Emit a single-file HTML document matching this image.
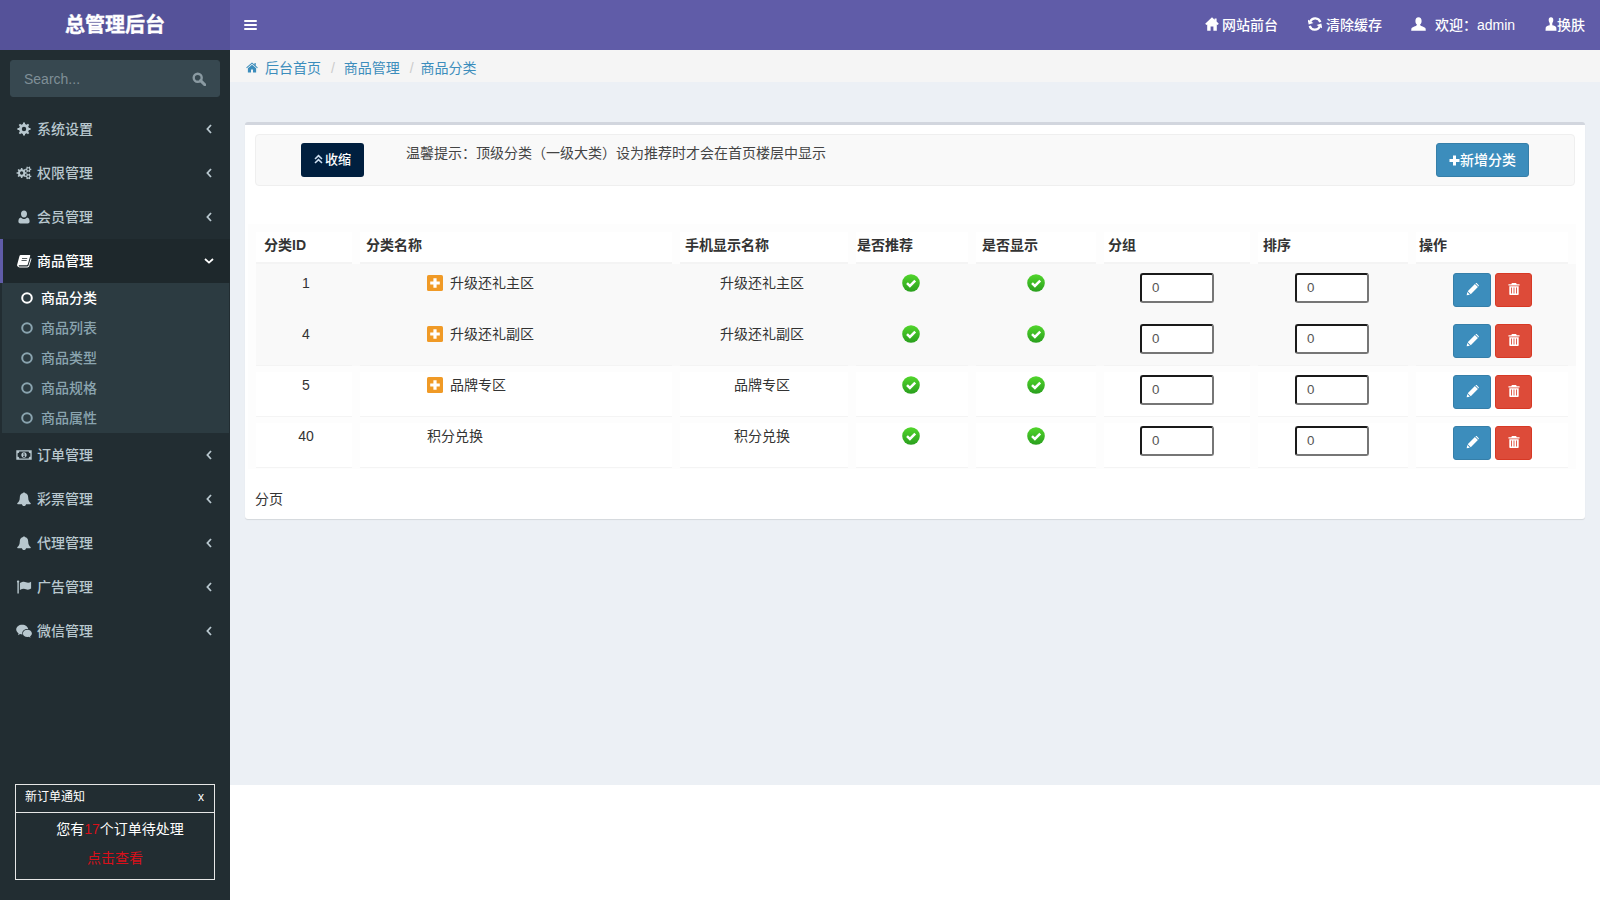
<!DOCTYPE html>
<html lang="zh-CN">
<head>
<meta charset="utf-8">
<title>总管理后台</title>
<style>
*{box-sizing:border-box}
html,body{margin:0;padding:0}
body{width:1600px;height:900px;overflow:hidden;background:#fff;font-family:"Liberation Sans","Noto Sans CJK SC",sans-serif;font-size:14px;line-height:20px;color:#333;position:relative}
a{text-decoration:none;color:inherit}
ul{list-style:none;margin:0;padding:0}
svg{display:block}
/* header */
.logo{position:absolute;left:0;top:0;width:230px;height:50px;background:#555299;color:#fff;font-size:20px;font-weight:bold;line-height:51px;text-align:center;-webkit-text-stroke:0.35px #fff}
.navbar{position:absolute;left:230px;top:0;width:1370px;height:50px;background:#605ca8;color:#fff}
.toggle{position:absolute;left:14px;top:20px;width:13px;height:12px}
.toggle i{display:block;height:2px;background:#fff;margin-bottom:2px;border-radius:1px}
.nav-r{position:absolute;top:0;height:50px;line-height:50px;color:#fff;font-size:14px;white-space:nowrap;font-weight:500}
.nav-r svg{position:absolute;top:17px}
/* sidebar */
.sidebar{position:absolute;left:0;top:50px;width:230px;height:850px;background:#222d32;color:#b8c7ce}
.sform{position:absolute;left:10px;top:10px;width:210px;height:37px;border:1px solid #374850;border-radius:3px;background:#374850}
.sform span{position:absolute;left:13px;top:8px;color:#7f8f97;font-size:14px;line-height:20px}
.sform svg{position:absolute;right:13px;top:11px}
.menu{position:absolute;left:0;top:57px;width:230px;font-weight:500}
.menu>li>a{display:block;height:44px;padding:12px 5px 12px 15px;position:relative;border-left:3px solid transparent;color:#b8c7ce;line-height:20px}
.menu>li>a .ic{position:absolute;left:13px;top:15px;width:16px;height:14px}
.menu>li>a .tx{position:absolute;left:34px;top:12px}
.menu>li>a .ar{position:absolute;right:18px;top:17px}
.menu>li.active>a{background:#1e282c;color:#fff;border-left-color:#605ca8}
.sub{background:#2c3b41;padding:0 0 0 5px;margin:0 1px 0 2px}
.sub li a{display:block;height:30px;padding:5px 5px 5px 15px;color:#8aa4af;position:relative;line-height:20px}
.sub li a .tx{position:absolute;left:34px;top:5px}
.sub li a svg{position:absolute;left:14px;top:9px}
.sub li.on a{color:#fff}
.notice{position:absolute;left:15px;top:734px;width:200px;height:96px;border:1px solid #e6e6e6;color:#fff}
.notice .hd{height:28px;border-bottom:1px solid #e6e6e6;font-size:12px;line-height:24px;padding-left:9px;position:relative}
.notice .hd b{position:absolute;right:10px;top:0;font-weight:normal}
.notice p{margin:0;text-align:center;font-size:14px}
.red{color:#d8101a}
/* content */
.content{position:absolute;left:230px;top:50px;width:1370px;height:735px;background:#ecf0f5}
.crumb{position:absolute;left:0;top:0;width:1370px;height:32px;background:#f5f5f5;color:#3c8dbc;line-height:20px;padding:8px 15px 0 15px;white-space:nowrap}
.crumb svg{position:absolute;left:16px;top:12px}
.crumb .sep{color:#ccc;padding:0 5px 0 10px}
.box{position:absolute;left:15px;top:72px;width:1340px;height:397px;background:#fff;border-top:3px solid #d2d6de;border-radius:3px;box-shadow:0 1px 1px rgba(0,0,0,.1)}
.tbar{position:absolute;left:10px;top:9px;width:1320px;height:52px;background:#f9f9f9;border:1px solid #efefef;border-radius:4px}
.btn{position:absolute;display:block;border-radius:3px;color:#fff;text-align:center;font-size:14px;border:1px solid transparent}
.tip{position:absolute;left:150px;top:8px;color:#444;white-space:nowrap}

.tbl{position:absolute;background:#fdfdfd}
.th{position:absolute;height:32px;background:#fff;border-bottom:2px solid #f4f4f4;font-weight:bold;color:#333;line-height:20px;padding-top:3px;white-space:nowrap}
.td{position:absolute;height:45px;background:#fff;border-bottom:1px solid #f4f4f4;color:#333}
.td.g{background:#f9f9f9}
.stripe{position:absolute;left:8px;width:1320px;background:#f9f9f9}
.c{text-align:center}
.inp{position:absolute;width:74px;height:30px;border:2px solid;border-color:#1a1a1a #767676 #767676 #1a1a1a;border-radius:3px;background:#fff;font-size:13.33px;line-height:26px;padding-left:10px;color:#555}
</style>
</head>
<body>
<svg width="0" height="0" style="position:absolute"><defs><linearGradient id="gk" x1="0" y1="0" x2="0" y2="1"><stop offset="0" stop-color="#52d62c"/><stop offset="1" stop-color="#2a9f1e"/></linearGradient></defs></svg>
<div class="logo">总管理后台</div>
<div class="navbar">
  <a class="toggle"><i></i><i></i><i></i></a>
  <a class="nav-r" style="left:975px"><svg width="14" height="14" viewBox="0 0 14 14" style=""><path fill="#fff" d="M7 0.2 L0.2 6.8 L1.4 8 L2.2 7.4 V13.8 H5.6 V9.6 H8.4 V13.8 H11.8 V7.4 L12.6 8 L13.8 6.8 L11.6 4.6 V1.4 H9.6 V2.7 Z"/></svg><span style="margin-left:17px">网站前台</span></a>
  <a class="nav-r" style="left:1078px"><svg width="14" height="14" viewBox="0 0 14 14" style=""><path fill="none" stroke="#fff" stroke-width="2.3" d="M12.3 5.2 A5.4 5.4 0 0 0 2.2 4.6"/><path fill="#fff" d="M0.2 2.2 L5.2 6.6 L0.2 7.2 Z" transform="rotate(-12 2 5)"/><path fill="none" stroke="#fff" stroke-width="2.3" d="M1.7 8.8 A5.4 5.4 0 0 0 11.8 9.4"/><path fill="#fff" d="M13.8 11.8 L8.8 7.4 L13.8 6.8 Z" transform="rotate(-12 12 9)"/></svg><span style="margin-left:18px">清除缓存</span></a>
  <a class="nav-r" style="left:1181px"><svg width="15" height="14" viewBox="0 0 15 14" style=""><path fill="#fff" d="M7.5 0.3 C9.6 0.3 10.6 1.9 10.6 3.9 C10.6 5.5 9.9 6.9 9.1 7.6 C9.1 8.3 9.3 8.6 10.2 9 C12.3 9.8 14.3 10.4 14.6 11.6 L14.8 13.7 H0.2 L0.4 11.6 C0.7 10.4 2.7 9.8 4.8 9 C5.7 8.6 5.9 8.3 5.9 7.6 C5.1 6.9 4.4 5.5 4.4 3.9 C4.4 1.9 5.4 0.3 7.5 0.3 Z"/></svg><span style="margin-left:24px">欢迎：admin</span></a>
  <a class="nav-r" style="left:1315px"><svg width="12" height="14" viewBox="0 0 12 14" style=""><path fill="#fff" d="M6 0.3 C7.6 0.3 8.3 1.4 8.3 3 C8.3 4.3 7.8 5.3 7.3 6 L7.3 8.2 C9 8.6 11 9.2 11.3 10.4 L11.5 13.7 H0.5 L0.7 10.4 C1 9.2 3 8.6 4.7 8.2 L4.7 6 C4.2 5.3 3.7 4.3 3.7 3 C3.7 1.4 4.4 0.3 6 0.3 Z"/></svg><span style="margin-left:12px">换肤</span></a>
</div>
<div class="sidebar">
  <div class="sform"><span>Search...</span><svg width="14" height="14" viewBox="0 0 14 14" style=""><circle cx="5.7" cy="5.7" r="4" fill="none" stroke="#8a9aa2" stroke-width="2.4"/><path d="M8.6 8.6 L12.8 12.8" stroke="#8a9aa2" stroke-width="3" stroke-linecap="round"/></svg></div>
  <ul class="menu">
  <li class=""><a><svg class="ic" width="14" height="14" viewBox="0 0 14 14" fill="#b8c7ce"><path fill-rule="evenodd" d="M11.88 5.91 L13.53 6.07 L13.53 7.93 L11.88 8.09 L11.22 9.68 L12.28 10.96 L10.96 12.28 L9.68 11.22 L8.09 11.88 L7.93 13.53 L6.07 13.53 L5.91 11.88 L4.32 11.22 L3.04 12.28 L1.72 10.96 L2.78 9.68 L2.12 8.09 L0.47 7.93 L0.47 6.07 L2.12 5.91 L2.78 4.32 L1.72 3.04 L3.04 1.72 L4.32 2.78 L5.91 2.12 L6.07 0.47 L7.93 0.47 L8.09 2.12 L9.68 2.78 L10.96 1.72 L12.28 3.04 L11.22 4.32 Z M9.20 7.00 A2.2 2.2 0 1 0 4.80 7.00 A2.2 2.2 0 1 0 9.20 7.00 Z"/></svg><span class="tx">系统设置</span><svg class="ar" width="6" height="10" viewBox="0 0 6 10"><path d="M5 1 L1.4 5 L5 9" fill="none" stroke="#b8c7ce" stroke-width="1.8"/></svg></a></li>
  <li class=""><a><svg class="ic" width="16" height="15" viewBox="0 0 16 15" fill="#b8c7ce"><path fill-rule="evenodd" d="M9.50 6.61 L10.95 6.73 L10.95 8.27 L9.50 8.39 L8.96 9.70 L9.90 10.80 L8.80 11.90 L7.70 10.96 L6.39 11.50 L6.27 12.95 L4.73 12.95 L4.61 11.50 L3.30 10.96 L2.20 11.90 L1.10 10.80 L2.04 9.70 L1.50 8.39 L0.05 8.27 L0.05 6.73 L1.50 6.61 L2.04 5.30 L1.10 4.20 L2.20 3.10 L3.30 4.04 L4.61 3.50 L4.73 2.05 L6.27 2.05 L6.39 3.50 L7.70 4.04 L8.80 3.10 L9.90 4.20 L8.96 5.30 Z M7.30 7.50 A1.8 1.8 0 1 0 3.70 7.50 A1.8 1.8 0 1 0 7.30 7.50 Z"/><path fill-rule="evenodd" d="M14.90 2.91 L15.84 2.98 L15.84 4.22 L14.90 4.29 L14.35 5.24 L14.76 6.10 L13.69 6.72 L13.15 5.94 L12.05 5.94 L11.51 6.72 L10.44 6.10 L10.85 5.24 L10.30 4.29 L9.36 4.22 L9.36 2.98 L10.30 2.91 L10.85 1.96 L10.44 1.10 L11.51 0.48 L12.05 1.26 L13.15 1.26 L13.69 0.48 L14.76 1.10 L14.35 1.96 Z M13.70 3.60 A1.1 1.1 0 1 0 11.50 3.60 A1.1 1.1 0 1 0 13.70 3.60 Z"/><path fill-rule="evenodd" d="M14.90 10.51 L15.84 10.58 L15.84 11.82 L14.90 11.89 L14.35 12.84 L14.76 13.70 L13.69 14.32 L13.15 13.54 L12.05 13.54 L11.51 14.32 L10.44 13.70 L10.85 12.84 L10.30 11.89 L9.36 11.82 L9.36 10.58 L10.30 10.51 L10.85 9.56 L10.44 8.70 L11.51 8.08 L12.05 8.86 L13.15 8.86 L13.69 8.08 L14.76 8.70 L14.35 9.56 Z M13.70 11.20 A1.1 1.1 0 1 0 11.50 11.20 A1.1 1.1 0 1 0 13.70 11.20 Z"/></svg><span class="tx">权限管理</span><svg class="ar" width="6" height="10" viewBox="0 0 6 10"><path d="M5 1 L1.4 5 L5 9" fill="none" stroke="#b8c7ce" stroke-width="1.8"/></svg></a></li>
  <li class=""><a><svg class="ic" width="12" height="14" viewBox="0 0 12 14" fill="#b8c7ce"><path d="M6 0.6 C7.9 0.6 9 2.1 9 4 C9 5.9 7.9 7.6 6 7.6 C4.1 7.6 3 5.9 3 4 C3 2.1 4.1 0.6 6 0.6 Z M2.9 7.4 C3.6 8.3 4.7 8.9 6 8.9 C7.3 8.9 8.4 8.3 9.1 7.4 C10.9 7.6 11.6 9.3 11.6 11.5 C11.6 12.7 10.8 13.4 9.7 13.4 H2.3 C1.2 13.4 0.4 12.7 0.4 11.5 C0.4 9.3 1.1 7.6 2.9 7.4 Z"/></svg><span class="tx">会员管理</span><svg class="ar" width="6" height="10" viewBox="0 0 6 10"><path d="M5 1 L1.4 5 L5 9" fill="none" stroke="#b8c7ce" stroke-width="1.8"/></svg></a></li>
  <li class="active"><a><svg class="ic" width="15" height="14" viewBox="0 0 15 14" fill="#fff"><path d="M4.2 1 H13 C13.6 1 13.9 1.5 13.7 2.1 L11.3 10.3 C11.1 10.9 10.5 11.3 9.9 11.3 H2.6 C2.2 11.3 2 11.6 2.2 11.9 C2.4 12.3 2.8 12.4 3.2 12.4 H10.9 C11.4 12.4 11.8 12.1 12 11.6 L14.3 3.9 C14.9 4.3 15 4.9 14.8 5.5 L12.7 12.3 C12.5 13 11.8 13.5 11 13.5 H3.2 C2 13.5 0.9 12.7 0.6 11.6 C0.5 11.2 0.6 10.9 0.7 10.6 L3 2.1 C3.2 1.4 3.6 1 4.2 1 Z M5.6 4.2 L5.4 5 H10.6 L10.8 4.2 Z M5.1 6.2 L4.9 7 H10.1 L10.3 6.2 Z" fill-rule="evenodd"/></svg><span class="tx">商品管理</span><svg class="ar" width="10" height="6" viewBox="0 0 10 6" style="top:19px;right:16px"><path d="M1 1 L5 4.6 L9 1" fill="none" stroke="#fff" stroke-width="1.8"/></svg></a><ul class="sub"><li class="on"><a><svg width="12" height="12" viewBox="0 0 12 12"><circle cx="6" cy="6" r="4.8" fill="none" stroke="#fff" stroke-width="2"/></svg><span class="tx">商品分类</span></a></li><li class=""><a><svg width="12" height="12" viewBox="0 0 12 12"><circle cx="6" cy="6" r="4.8" fill="none" stroke="#8aa4af" stroke-width="2"/></svg><span class="tx">商品列表</span></a></li><li class=""><a><svg width="12" height="12" viewBox="0 0 12 12"><circle cx="6" cy="6" r="4.8" fill="none" stroke="#8aa4af" stroke-width="2"/></svg><span class="tx">商品类型</span></a></li><li class=""><a><svg width="12" height="12" viewBox="0 0 12 12"><circle cx="6" cy="6" r="4.8" fill="none" stroke="#8aa4af" stroke-width="2"/></svg><span class="tx">商品规格</span></a></li><li class=""><a><svg width="12" height="12" viewBox="0 0 12 12"><circle cx="6" cy="6" r="4.8" fill="none" stroke="#8aa4af" stroke-width="2"/></svg><span class="tx">商品属性</span></a></li></ul></li>
  <li class=""><a><svg class="ic" width="16" height="14" viewBox="0 0 16 14" fill="#b8c7ce"><path fill-rule="evenodd" d="M0.3 2.3 H15.7 V11.7 H0.3 Z M1.6 5.2 V8.8 C2.8 8.8 3.3 9.4 3.3 10.5 H12.7 C12.7 9.4 13.2 8.8 14.4 8.8 V5.2 C13.2 5.2 12.7 4.6 12.7 3.5 H3.3 C3.3 4.6 2.8 5.2 1.6 5.2 Z M8 4.2 C9.6 4.2 10.7 5.4 10.7 7 C10.7 8.6 9.6 9.8 8 9.8 C6.4 9.8 5.3 8.6 5.3 7 C5.3 5.4 6.4 4.2 8 4.2 Z M7.2 5.6 V6.2 H7.7 V8.3 H7 V8.9 H9.1 V8.3 H8.5 V5.3 H7.9 Z"/></svg><span class="tx">订单管理</span><svg class="ar" width="6" height="10" viewBox="0 0 6 10"><path d="M5 1 L1.4 5 L5 9" fill="none" stroke="#b8c7ce" stroke-width="1.8"/></svg></a></li>
  <li class=""><a><svg class="ic" width="14" height="14" viewBox="0 0 14 14" fill="#b8c7ce"><path d="M7 0.2 C7.5 0.2 7.8 0.5 7.8 1 C10 1.4 11.2 3.2 11.2 5.4 C11.2 8.2 12.2 9.9 13.8 11.2 C13.8 11.8 13.4 12.2 12.8 12.2 H9 C9 13.3 8.1 14 7 14 C5.9 14 5 13.3 5 12.2 H1.2 C0.6 12.2 0.2 11.8 0.2 11.2 C1.8 9.9 2.8 8.2 2.8 5.4 C2.8 3.2 4 1.4 6.2 1 C6.2 0.5 6.5 0.2 7 0.2 Z"/></svg><span class="tx">彩票管理</span><svg class="ar" width="6" height="10" viewBox="0 0 6 10"><path d="M5 1 L1.4 5 L5 9" fill="none" stroke="#b8c7ce" stroke-width="1.8"/></svg></a></li>
  <li class=""><a><svg class="ic" width="14" height="14" viewBox="0 0 14 14" fill="#b8c7ce"><path d="M7 0.2 C7.5 0.2 7.8 0.5 7.8 1 C10 1.4 11.2 3.2 11.2 5.4 C11.2 8.2 12.2 9.9 13.8 11.2 C13.8 11.8 13.4 12.2 12.8 12.2 H9 C9 13.3 8.1 14 7 14 C5.9 14 5 13.3 5 12.2 H1.2 C0.6 12.2 0.2 11.8 0.2 11.2 C1.8 9.9 2.8 8.2 2.8 5.4 C2.8 3.2 4 1.4 6.2 1 C6.2 0.5 6.5 0.2 7 0.2 Z"/></svg><span class="tx">代理管理</span><svg class="ar" width="6" height="10" viewBox="0 0 6 10"><path d="M5 1 L1.4 5 L5 9" fill="none" stroke="#b8c7ce" stroke-width="1.8"/></svg></a></li>
  <li class=""><a><svg class="ic" width="15" height="14" viewBox="0 0 15 14" fill="#b8c7ce"><path d="M1.6 0.6 C2.3 0.6 2.8 1.1 2.8 1.7 C2.8 2.1 2.6 2.4 2.3 2.6 V13.6 H0.9 V2.6 C0.6 2.4 0.4 2.1 0.4 1.7 C0.4 1.1 0.9 0.6 1.6 0.6 Z M3.4 3 C5 2.1 6.2 1.7 7.4 1.7 C9 1.7 10 2.7 11.6 2.7 C12.6 2.7 13.6 2.3 14.6 1.8 V8.6 C13.6 9.2 12.6 9.7 11.4 9.7 C9.8 9.7 9 8.8 7.4 8.8 C6 8.8 4.8 9.3 3.4 10 Z"/></svg><span class="tx">广告管理</span><svg class="ar" width="6" height="10" viewBox="0 0 6 10"><path d="M5 1 L1.4 5 L5 9" fill="none" stroke="#b8c7ce" stroke-width="1.8"/></svg></a></li>
  <li class=""><a><svg class="ic" width="16" height="14" viewBox="0 0 16 14" fill="#b8c7ce"><path d="M6.2 0.8 C9.4 0.8 11.9 2.7 12.2 5.2 C11.9 5.15 11.6 5.1 11.3 5.1 C8.5 5.1 6.3 7 6.3 9.3 C6.3 9.7 6.35 10.1 6.5 10.4 C6.4 10.4 6.3 10.4 6.2 10.4 C5.4 10.4 4.8 10.3 4.1 10.1 L2 11.2 L2.6 9.4 C1.1 8.4 0.2 7.1 0.2 5.6 C0.2 2.9 2.9 0.8 6.2 0.8 Z"/><path d="M11.4 5.8 C13.9 5.8 15.9 7.4 15.9 9.4 C15.9 10.5 15.2 11.5 14.1 12.3 L14.5 13.7 L12.9 12.8 C12.4 12.9 11.9 13 11.4 13 C8.9 13 6.9 11.4 6.9 9.4 C6.9 7.4 8.9 5.8 11.4 5.8 Z"/></svg><span class="tx">微信管理</span><svg class="ar" width="6" height="10" viewBox="0 0 6 10"><path d="M5 1 L1.4 5 L5 9" fill="none" stroke="#b8c7ce" stroke-width="1.8"/></svg></a></li>
  </ul>
  <div class="notice">
    <div class="hd">新订单通知<b>x</b></div>
    <p style="margin-top:6px;padding-left:10px">您有<span class="red">17</span>个订单待处理</p>
    <p style="margin-top:9px"><a class="red">点击查看</a></p>
  </div>
</div>
<div class="content">
  <div class="crumb"><svg width="12" height="11" viewBox="0 0 13 12"><path fill="#3c8dbc" d="M6.5 0.6 L0.2 5.9 L0.9 6.7 L6.5 2 L12.1 6.7 L12.8 5.9 L10.6 4 V1.2 H9.2 V2.8 Z"/><path fill="#3c8dbc" d="M6.5 2.9 L2 6.7 V11.4 H5.4 V8.2 H7.6 V11.4 H11 V6.7 Z"/></svg><span style="margin-left:20px">后台首页</span><span class="sep">/&nbsp;</span><span>商品管理</span><span class="sep" style="padding-right:3px">/&nbsp;</span><span>商品分类</span></div>
  <div class="box">
    <div class="tbar"><a class="btn" style="left:45px;top:8px;width:63px;height:34px;line-height:32px;background:#001f3f;padding-right:0;font-size:13px;font-weight:500"><svg width="9" height="10" viewBox="0 0 9 10" style="display:inline-block;vertical-align:0px;margin-right:2px"><path d="M1 5 L4.5 1.6 L8 5 M1 9 L4.5 5.6 L8 9" fill="none" stroke="#cfe0f2" stroke-width="1.5"/></svg>收缩</a><span class="tip">温馨提示：顶级分类（一级大类）设为推荐时才会在首页楼层中显示</span><a class="btn" style="left:1180px;top:8px;width:93px;height:34px;line-height:32px;background:#3c8dbc;border-color:#367fa9;font-weight:500"><svg width="11" height="11" viewBox="0 0 11 11" style="display:inline-block;vertical-align:-1px"><path d="M4 0.5 H7 V4 H10.5 V7 H7 V10.5 H4 V7 H0.5 V4 H4 Z" fill="#fff"/></svg>新增分类</a></div>
    <div class="tbl" style="left:3px;top:99px;width:1328px;height:245px">
<div class="th" style="left:8px;top:8px;width:96px;padding-left:8px">分类ID</div>
<div class="th" style="left:112px;top:8px;width:312px;padding-left:6px">分类名称</div>
<div class="th" style="left:432px;top:8px;width:168px;padding-left:5px">手机显示名称</div>
<div class="th" style="left:608px;top:8px;width:112px;padding-left:1px">是否推荐</div>
<div class="th" style="left:728px;top:8px;width:120px;padding-left:6px">是否显示</div>
<div class="th" style="left:856px;top:8px;width:146px;padding-left:4px">分组</div>
<div class="th" style="left:1010px;top:8px;width:150px;padding-left:5px">排序</div>
<div class="th" style="left:1168px;top:8px;width:152px;padding-left:3px">操作</div>
<div class="stripe" style="top:40px;height:49px"></div>
<div class="td g" style="left:8px;top:46px;width:96px"><div class="c" style="padding-top:3px;padding-left:4px">1</div></div>
<div class="td g" style="left:112px;top:46px;width:312px"><div style="position:absolute;left:67px;top:3px;white-space:nowrap"><svg width="16" height="16" viewBox="0 0 15 15" style="display:inline-block;vertical-align:-3px;margin-right:7px"><rect width="15" height="15" rx="1.5" fill="#f09a26"/><path d="M6 3 H9 V6 H12 V9 H9 V12 H6 V9 H3 V6 H6 Z" fill="#fff"/></svg>升级还礼主区</div></div>
<div class="td g" style="left:432px;top:46px;width:168px"><div class="c" style="padding-top:3px;padding-right:4px">升级还礼主区</div></div>
<div class="td g" style="left:608px;top:46px;width:112px"><div style="padding-top:4px;padding-right:2px"><svg width="18" height="18" viewBox="0 0 18 18" style="margin:0 auto"><circle cx="9" cy="9" r="8.8" fill="url(#gk)"/><path d="M5 9.2 L7.9 12 L13.2 6.6" fill="none" stroke="#fff" stroke-width="2.5"/></svg></div></div>
<div class="td g" style="left:728px;top:46px;width:120px"><div style="padding-top:4px;padding-right:0px"><svg width="18" height="18" viewBox="0 0 18 18" style="margin:0 auto"><circle cx="9" cy="9" r="8.8" fill="url(#gk)"/><path d="M5 9.2 L7.9 12 L13.2 6.6" fill="none" stroke="#fff" stroke-width="2.5"/></svg></div></div>
<div class="td g" style="left:856px;top:46px;width:146px"><div class="inp" style="left:36px;top:3px">0</div></div>
<div class="td g" style="left:1010px;top:46px;width:150px"><div class="inp" style="left:37px;top:3px">0</div></div>
<div class="td g" style="left:1168px;top:46px;width:152px"><a class="btn" style="left:37px;top:3px;width:38px;height:34px;background:#3c8dbc;border-color:#367fa9"><svg width="13" height="13" viewBox="0 0 12 12" style="margin:9px auto 0"><path d="M8.2 1 L11 3.8 L4.4 10.4 L1.6 7.6 Z M1.2 8.4 L3.6 10.8 L0.6 11.4 Z M8.8 0.4 C9.2 0 9.8 0 10.2 0.4 L11.6 1.8 C12 2.2 12 2.8 11.6 3.2 Z" fill="#fff"/></svg></a><a class="btn" style="left:79px;top:3px;width:37px;height:34px;background:#dd4b39;border-color:#d73925"><svg width="12" height="14" viewBox="0 0 11 12" style="margin:8px auto 0"><path fill-rule="evenodd" d="M3.6 0.4 H7.4 L8 1.6 H10.6 V2.8 H0.4 V1.6 H3 Z M1.2 3.4 H9.8 V10.6 C9.8 11.2 9.4 11.6 8.8 11.6 H2.2 C1.6 11.6 1.2 11.2 1.2 10.6 Z M2.8 4.6 V10.2 H3.6 V4.6 Z M5.1 4.6 V10.2 H5.9 V4.6 Z M7.4 4.6 V10.2 H8.2 V4.6 Z" fill="#fff"/></svg></a></div>
<div class="stripe" style="top:89px;height:53px"></div>
<div class="td g" style="left:8px;top:97px;width:96px"><div class="c" style="padding-top:3px;padding-left:4px">4</div></div>
<div class="td g" style="left:112px;top:97px;width:312px"><div style="position:absolute;left:67px;top:3px;white-space:nowrap"><svg width="16" height="16" viewBox="0 0 15 15" style="display:inline-block;vertical-align:-3px;margin-right:7px"><rect width="15" height="15" rx="1.5" fill="#f09a26"/><path d="M6 3 H9 V6 H12 V9 H9 V12 H6 V9 H3 V6 H6 Z" fill="#fff"/></svg>升级还礼副区</div></div>
<div class="td g" style="left:432px;top:97px;width:168px"><div class="c" style="padding-top:3px;padding-right:4px">升级还礼副区</div></div>
<div class="td g" style="left:608px;top:97px;width:112px"><div style="padding-top:4px;padding-right:2px"><svg width="18" height="18" viewBox="0 0 18 18" style="margin:0 auto"><circle cx="9" cy="9" r="8.8" fill="url(#gk)"/><path d="M5 9.2 L7.9 12 L13.2 6.6" fill="none" stroke="#fff" stroke-width="2.5"/></svg></div></div>
<div class="td g" style="left:728px;top:97px;width:120px"><div style="padding-top:4px;padding-right:0px"><svg width="18" height="18" viewBox="0 0 18 18" style="margin:0 auto"><circle cx="9" cy="9" r="8.8" fill="url(#gk)"/><path d="M5 9.2 L7.9 12 L13.2 6.6" fill="none" stroke="#fff" stroke-width="2.5"/></svg></div></div>
<div class="td g" style="left:856px;top:97px;width:146px"><div class="inp" style="left:36px;top:3px">0</div></div>
<div class="td g" style="left:1010px;top:97px;width:150px"><div class="inp" style="left:37px;top:3px">0</div></div>
<div class="td g" style="left:1168px;top:97px;width:152px"><a class="btn" style="left:37px;top:3px;width:38px;height:34px;background:#3c8dbc;border-color:#367fa9"><svg width="13" height="13" viewBox="0 0 12 12" style="margin:9px auto 0"><path d="M8.2 1 L11 3.8 L4.4 10.4 L1.6 7.6 Z M1.2 8.4 L3.6 10.8 L0.6 11.4 Z M8.8 0.4 C9.2 0 9.8 0 10.2 0.4 L11.6 1.8 C12 2.2 12 2.8 11.6 3.2 Z" fill="#fff"/></svg></a><a class="btn" style="left:79px;top:3px;width:37px;height:34px;background:#dd4b39;border-color:#d73925"><svg width="12" height="14" viewBox="0 0 11 12" style="margin:8px auto 0"><path fill-rule="evenodd" d="M3.6 0.4 H7.4 L8 1.6 H10.6 V2.8 H0.4 V1.6 H3 Z M1.2 3.4 H9.8 V10.6 C9.8 11.2 9.4 11.6 8.8 11.6 H2.2 C1.6 11.6 1.2 11.2 1.2 10.6 Z M2.8 4.6 V10.2 H3.6 V4.6 Z M5.1 4.6 V10.2 H5.9 V4.6 Z M7.4 4.6 V10.2 H8.2 V4.6 Z" fill="#fff"/></svg></a></div>
<div class="td" style="left:8px;top:148px;width:96px"><div class="c" style="padding-top:3px;padding-left:4px">5</div></div>
<div class="td" style="left:112px;top:148px;width:312px"><div style="position:absolute;left:67px;top:3px;white-space:nowrap"><svg width="16" height="16" viewBox="0 0 15 15" style="display:inline-block;vertical-align:-3px;margin-right:7px"><rect width="15" height="15" rx="1.5" fill="#f09a26"/><path d="M6 3 H9 V6 H12 V9 H9 V12 H6 V9 H3 V6 H6 Z" fill="#fff"/></svg>品牌专区</div></div>
<div class="td" style="left:432px;top:148px;width:168px"><div class="c" style="padding-top:3px;padding-right:4px">品牌专区</div></div>
<div class="td" style="left:608px;top:148px;width:112px"><div style="padding-top:4px;padding-right:2px"><svg width="18" height="18" viewBox="0 0 18 18" style="margin:0 auto"><circle cx="9" cy="9" r="8.8" fill="url(#gk)"/><path d="M5 9.2 L7.9 12 L13.2 6.6" fill="none" stroke="#fff" stroke-width="2.5"/></svg></div></div>
<div class="td" style="left:728px;top:148px;width:120px"><div style="padding-top:4px;padding-right:0px"><svg width="18" height="18" viewBox="0 0 18 18" style="margin:0 auto"><circle cx="9" cy="9" r="8.8" fill="url(#gk)"/><path d="M5 9.2 L7.9 12 L13.2 6.6" fill="none" stroke="#fff" stroke-width="2.5"/></svg></div></div>
<div class="td" style="left:856px;top:148px;width:146px"><div class="inp" style="left:36px;top:3px">0</div></div>
<div class="td" style="left:1010px;top:148px;width:150px"><div class="inp" style="left:37px;top:3px">0</div></div>
<div class="td" style="left:1168px;top:148px;width:152px"><a class="btn" style="left:37px;top:3px;width:38px;height:34px;background:#3c8dbc;border-color:#367fa9"><svg width="13" height="13" viewBox="0 0 12 12" style="margin:9px auto 0"><path d="M8.2 1 L11 3.8 L4.4 10.4 L1.6 7.6 Z M1.2 8.4 L3.6 10.8 L0.6 11.4 Z M8.8 0.4 C9.2 0 9.8 0 10.2 0.4 L11.6 1.8 C12 2.2 12 2.8 11.6 3.2 Z" fill="#fff"/></svg></a><a class="btn" style="left:79px;top:3px;width:37px;height:34px;background:#dd4b39;border-color:#d73925"><svg width="12" height="14" viewBox="0 0 11 12" style="margin:8px auto 0"><path fill-rule="evenodd" d="M3.6 0.4 H7.4 L8 1.6 H10.6 V2.8 H0.4 V1.6 H3 Z M1.2 3.4 H9.8 V10.6 C9.8 11.2 9.4 11.6 8.8 11.6 H2.2 C1.6 11.6 1.2 11.2 1.2 10.6 Z M2.8 4.6 V10.2 H3.6 V4.6 Z M5.1 4.6 V10.2 H5.9 V4.6 Z M7.4 4.6 V10.2 H8.2 V4.6 Z" fill="#fff"/></svg></a></div>
<div class="td" style="left:8px;top:199px;width:96px"><div class="c" style="padding-top:3px;padding-left:4px">40</div></div>
<div class="td" style="left:112px;top:199px;width:312px"><div style="position:absolute;left:67px;top:3px;white-space:nowrap">积分兑换</div></div>
<div class="td" style="left:432px;top:199px;width:168px"><div class="c" style="padding-top:3px;padding-right:4px">积分兑换</div></div>
<div class="td" style="left:608px;top:199px;width:112px"><div style="padding-top:4px;padding-right:2px"><svg width="18" height="18" viewBox="0 0 18 18" style="margin:0 auto"><circle cx="9" cy="9" r="8.8" fill="url(#gk)"/><path d="M5 9.2 L7.9 12 L13.2 6.6" fill="none" stroke="#fff" stroke-width="2.5"/></svg></div></div>
<div class="td" style="left:728px;top:199px;width:120px"><div style="padding-top:4px;padding-right:0px"><svg width="18" height="18" viewBox="0 0 18 18" style="margin:0 auto"><circle cx="9" cy="9" r="8.8" fill="url(#gk)"/><path d="M5 9.2 L7.9 12 L13.2 6.6" fill="none" stroke="#fff" stroke-width="2.5"/></svg></div></div>
<div class="td" style="left:856px;top:199px;width:146px"><div class="inp" style="left:36px;top:3px">0</div></div>
<div class="td" style="left:1010px;top:199px;width:150px"><div class="inp" style="left:37px;top:3px">0</div></div>
<div class="td" style="left:1168px;top:199px;width:152px"><a class="btn" style="left:37px;top:3px;width:38px;height:34px;background:#3c8dbc;border-color:#367fa9"><svg width="13" height="13" viewBox="0 0 12 12" style="margin:9px auto 0"><path d="M8.2 1 L11 3.8 L4.4 10.4 L1.6 7.6 Z M1.2 8.4 L3.6 10.8 L0.6 11.4 Z M8.8 0.4 C9.2 0 9.8 0 10.2 0.4 L11.6 1.8 C12 2.2 12 2.8 11.6 3.2 Z" fill="#fff"/></svg></a><a class="btn" style="left:79px;top:3px;width:37px;height:34px;background:#dd4b39;border-color:#d73925"><svg width="12" height="14" viewBox="0 0 11 12" style="margin:8px auto 0"><path fill-rule="evenodd" d="M3.6 0.4 H7.4 L8 1.6 H10.6 V2.8 H0.4 V1.6 H3 Z M1.2 3.4 H9.8 V10.6 C9.8 11.2 9.4 11.6 8.8 11.6 H2.2 C1.6 11.6 1.2 11.2 1.2 10.6 Z M2.8 4.6 V10.2 H3.6 V4.6 Z M5.1 4.6 V10.2 H5.9 V4.6 Z M7.4 4.6 V10.2 H8.2 V4.6 Z" fill="#fff"/></svg></a></div>
</div>
    <div style="position:absolute;left:10px;top:364px;color:#333">分页</div>
  </div>
</div>
</body>
</html>
